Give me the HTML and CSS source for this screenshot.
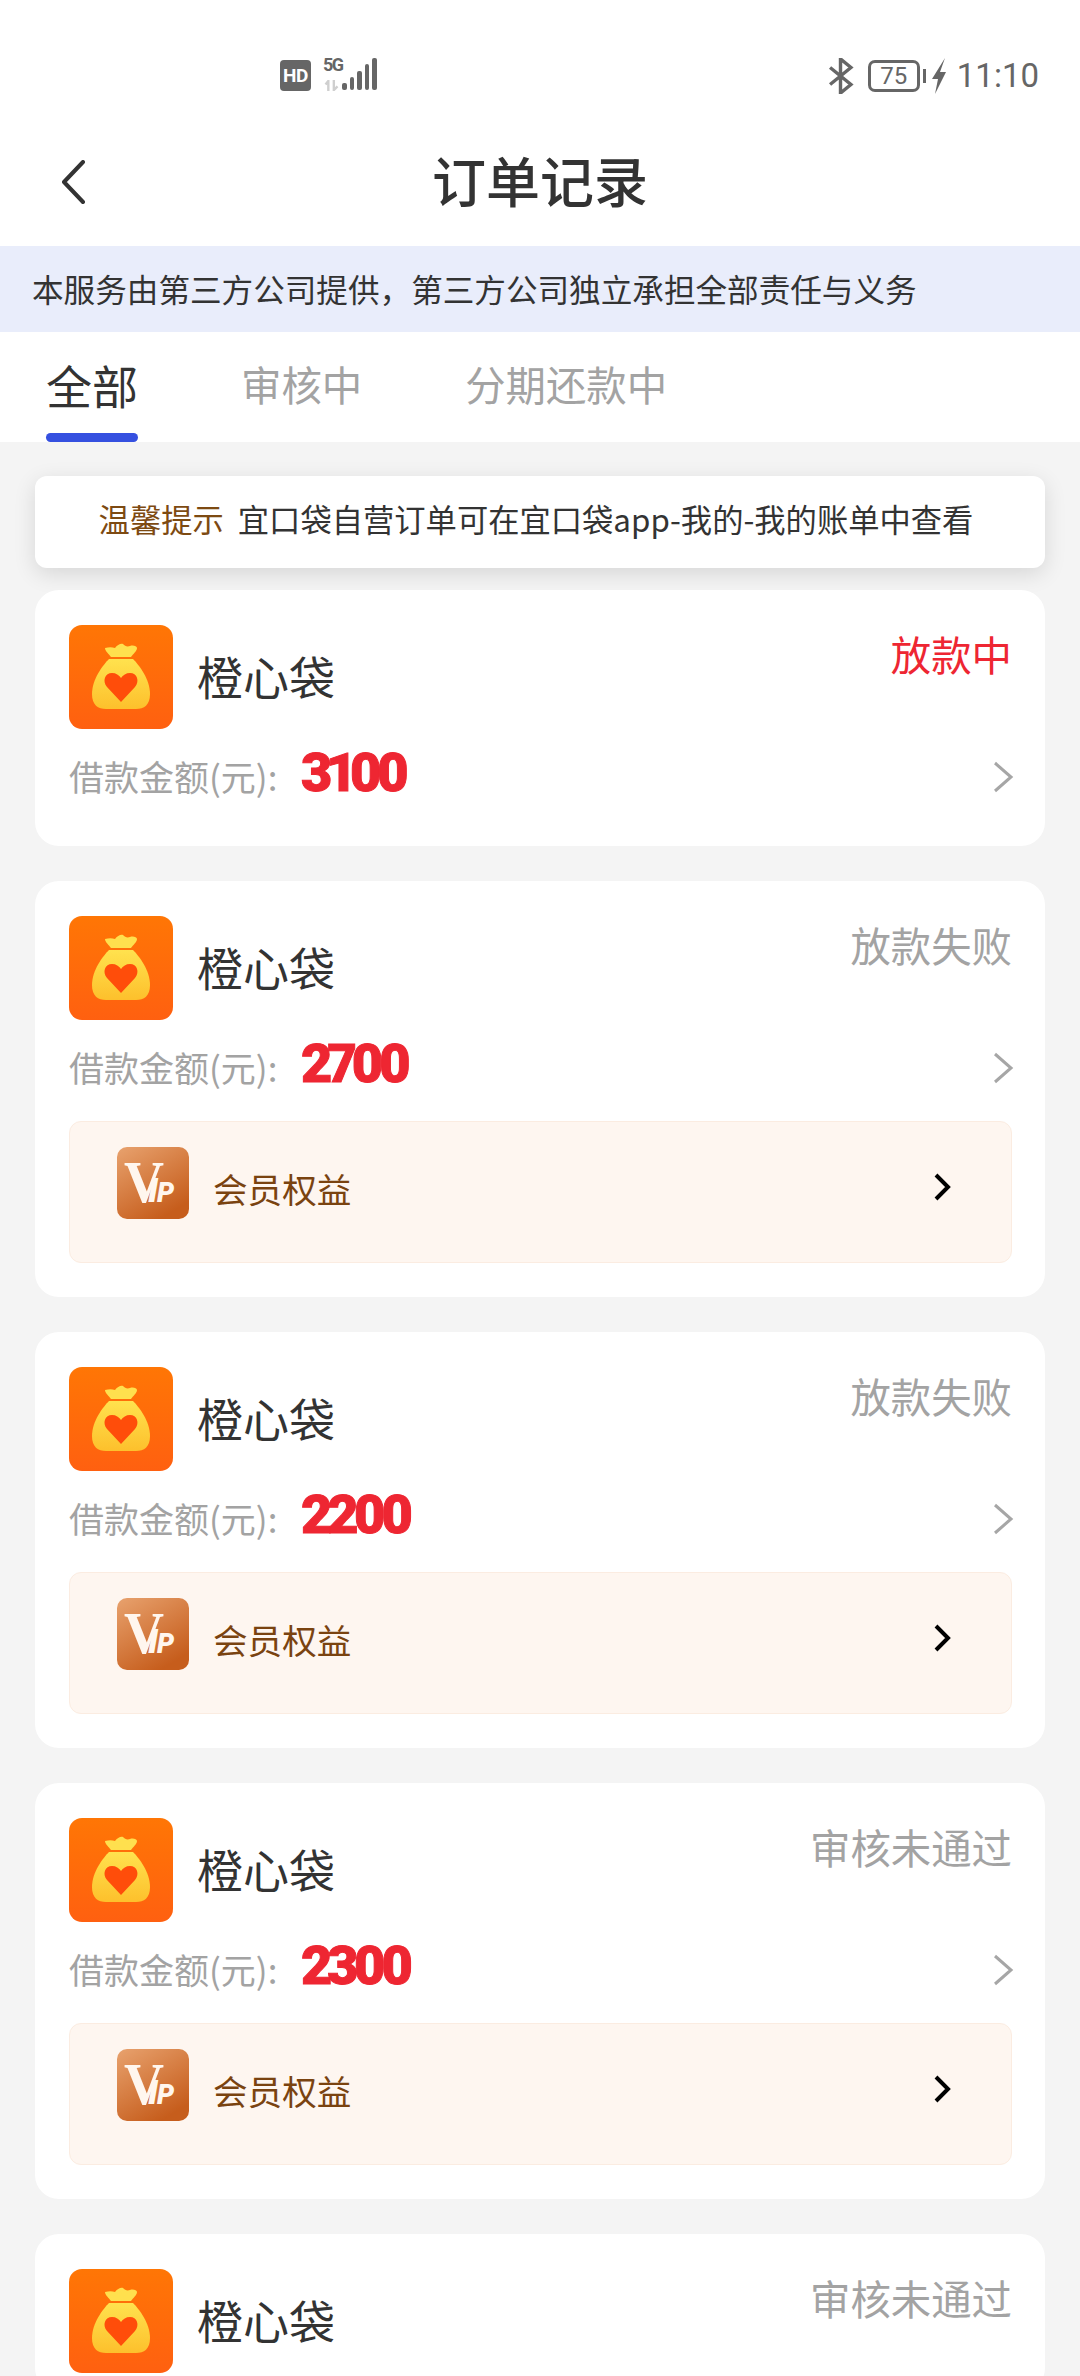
FILE: index.html
```html
<!DOCTYPE html>
<html lang="zh-CN">
<head>
<meta charset="utf-8">
<title>订单记录</title>
<link rel="stylesheet" href="styles.css">
</head>
<body>
<svg class="defs" width="0" height="0" aria-hidden="true">
  <defs>
    <linearGradient id="bagBg" x1="0" y1="0" x2="0" y2="1"><stop offset="0" stop-color="#ff7605"/><stop offset="1" stop-color="#ff6010"/></linearGradient>
    <linearGradient id="bagFill" x1="0" y1="0" x2="0" y2="1"><stop offset="0" stop-color="#ffe24e"/><stop offset="1" stop-color="#fdc02c"/></linearGradient>
    <linearGradient id="vipBg" x1="0" y1="0" x2="0.6" y2="1"><stop offset="0" stop-color="#e8a26e"/><stop offset="1" stop-color="#c65d1c"/></linearGradient>
    <symbol id="bag" viewBox="0 0 104 104">
      <rect width="104" height="104" rx="13" fill="url(#bagBg)"/>
      <path d="M36 23c4-1 7-1 10 0 2-3 6-5 8-4 2 2 4 3 7 2 3-1 7 0 7 2 0 3-4 6-6 9H42c-2-3-6-6-6-9z" fill="#ffe04e"/>
      <path d="M40 34h24c6 6 17 20 17 35 0 11-6 15-14 15H37c-8 0-14-4-14-15 0-15 11-29 17-35z" fill="url(#bagFill)"/>
      <path d="M52 77 38 62c-5-6-2-14 5-14 4 0 7 2 9 5 2-3 5-5 9-5 7 0 10 8 5 14z" fill="#ff4d0a"/>
    </symbol>
    <symbol id="vip" viewBox="0 0 72 72">
      <rect width="72" height="72" rx="10" fill="url(#vipBg)"/>
      <text x="7" y="55" class="vip-v" textLength="40" lengthAdjust="spacingAndGlyphs">V</text>
      <text x="31" y="55" class="vip-i">I</text>
      <text x="40" y="55" class="vip-p">P</text>
    </symbol>
  </defs>
</svg>

<div class="statusbar">
  <div class="status-left">
    <span class="hd">HD</span>
    <div class="signal">
      <div class="net"><span class="fiveg">5G</span>
        <svg class="arrows" width="18" height="11" viewBox="0 0 18 12"><path d="M2 5 5 1v11M11 0v11l4-4" fill="none" stroke="#cfcfcf" stroke-width="2.6"/></svg>
      </div>
      <div class="bars"><i class="b1"></i><i class="b2"></i><i class="b3"></i><i class="b4"></i><i class="b5"></i></div>
    </div>
  </div>
  <div class="status-right">
    <svg class="bt" width="27" height="36" viewBox="0 0 28 38"><path d="M3 10 25 28 14 37V1L25 10 3 28" fill="none" stroke="#666" stroke-width="3.600"/></svg>
    <span class="battery">75</span><span class="batcap"></span>
    <svg class="bolt" width="16" height="36" viewBox="0 0 16 36"><path d="M14 0 1 21h6L4 36 15 14H9z" fill="#666"/></svg>
    <span class="time">11:10</span>
  </div>
</div>

<header class="navbar">
  <svg class="back" width="26" height="44" viewBox="0 0 26 44"><path d="M23 2 4 22l19 20" fill="none" stroke="#333" stroke-width="4" stroke-linecap="round" stroke-linejoin="round"/></svg>
  <h1 class="title">订单记录</h1>
</header>

<div class="banner">本服务由第三方公司提供，第三方公司独立承担全部责任与义务</div>

<nav class="tabs">
  <a class="tab active">全部</a>
  <a class="tab">审核中</a>
  <a class="tab">分期还款中</a>
</nav>

<main class="list">
  <div class="notice"><span class="notice-tag">温馨提示</span><span>宜口袋自营订单可在宜口袋app-我的-我的账单中查看</span></div>

  <section class="card">
    <div class="card-head">
      <svg class="logo"><use href="#bag"/></svg>
      <span class="name">橙心袋</span>
      <span class="status red">放款中</span>
    </div>
    <div class="amount-row">
      <span class="amount-label">借款金额(元):</span><span class="amount">3100</span>
      <svg class="chev" width="22" height="32" viewBox="0 0 22 32"><path d="M3 2l16 14L3 30" fill="none" stroke="#a6a6a6" stroke-width="3"/></svg>
    </div>
  </section>

  <section class="card">
    <div class="card-head">
      <svg class="logo"><use href="#bag"/></svg>
      <span class="name">橙心袋</span>
      <span class="status">放款失败</span>
    </div>
    <div class="amount-row">
      <span class="amount-label">借款金额(元):</span><span class="amount">2700</span>
      <svg class="chev" width="22" height="32" viewBox="0 0 22 32"><path d="M3 2l16 14L3 30" fill="none" stroke="#a6a6a6" stroke-width="3"/></svg>
    </div>
    <div class="vip">
      <svg class="vip-icon"><use href="#vip"/></svg>
      <span class="vip-text">会员权益</span>
      <svg class="vip-chev" width="20" height="30" viewBox="0 0 20 30"><path d="M3 3l12 12L3 27" fill="none" stroke="#000" stroke-width="4"/></svg>
    </div>
  </section>

  <section class="card">
    <div class="card-head">
      <svg class="logo"><use href="#bag"/></svg>
      <span class="name">橙心袋</span>
      <span class="status">放款失败</span>
    </div>
    <div class="amount-row">
      <span class="amount-label">借款金额(元):</span><span class="amount">2200</span>
      <svg class="chev" width="22" height="32" viewBox="0 0 22 32"><path d="M3 2l16 14L3 30" fill="none" stroke="#a6a6a6" stroke-width="3"/></svg>
    </div>
    <div class="vip">
      <svg class="vip-icon"><use href="#vip"/></svg>
      <span class="vip-text">会员权益</span>
      <svg class="vip-chev" width="20" height="30" viewBox="0 0 20 30"><path d="M3 3l12 12L3 27" fill="none" stroke="#000" stroke-width="4"/></svg>
    </div>
  </section>

  <section class="card">
    <div class="card-head">
      <svg class="logo"><use href="#bag"/></svg>
      <span class="name">橙心袋</span>
      <span class="status">审核未通过</span>
    </div>
    <div class="amount-row">
      <span class="amount-label">借款金额(元):</span><span class="amount">2300</span>
      <svg class="chev" width="22" height="32" viewBox="0 0 22 32"><path d="M3 2l16 14L3 30" fill="none" stroke="#a6a6a6" stroke-width="3"/></svg>
    </div>
    <div class="vip">
      <svg class="vip-icon"><use href="#vip"/></svg>
      <span class="vip-text">会员权益</span>
      <svg class="vip-chev" width="20" height="30" viewBox="0 0 20 30"><path d="M3 3l12 12L3 27" fill="none" stroke="#000" stroke-width="4"/></svg>
    </div>
  </section>

  <section class="card">
    <div class="card-head">
      <svg class="logo"><use href="#bag"/></svg>
      <span class="name">橙心袋</span>
      <span class="status">审核未通过</span>
    </div>
  </section>
</main>
</body>
</html>
```
FILE: styles.css
```css
* { box-sizing: border-box; }
html, body { margin: 0; padding: 0; }
body {
  width: 1080px;
  height: 2376px;
  overflow: hidden;
  background: #f4f4f4;
  font-family: "Noto Sans CJK SC", "Noto Sans", sans-serif;
  color: #333;
}
.defs { position: absolute; }
.statusbar {
  height: 120px;
  background: #fff;
  display: flex;
  justify-content: space-between;
  padding: 51px 41px 0 280px;
  color: #666;
}
.status-left { display: flex; gap: 12px; height: 42px; }
.hd {
  width: 31px; height: 31px; margin-top: 9px;
  border-radius: 4px;
  background: #666; color: #fff;
  font: 700 19px/31px "Roboto", sans-serif;
  letter-spacing: -.5px;
  text-align: center;
}
.signal { display: flex; }
.net { display: flex; flex-direction: column; width: 19px; }
.fiveg { font: 700 18px/18px "Roboto", sans-serif; letter-spacing: -1.500px; margin-top: 5px; }
.arrows { margin-top: 6px; }
.bars { display: flex; align-items: flex-end; gap: 3px; height: 39px; }
.bars i { width: 4.500px; background: #666; border-radius: 2px; display: block; }
.bars .b1 { height: 7px; }
.bars .b2 { height: 13px; }
.bars .b3 { height: 19px; }
.bars .b4 { height: 26px; }
.bars .b5 { height: 32px; }
.status-right { display: flex; align-items: center; height: 48px; padding-top: 2px; }
.bt { margin-right: 14px; }
.battery {
  width: 52px; height: 32px;
  border: 3px solid #666; border-radius: 7px;
  font: 400 24px/26px "Roboto", sans-serif;
  text-align: center;
}
.batcap { width: 3px; height: 14px; background: #666; margin: 0 5px 0 3px; }
.bolt { margin-right: 10px; }
.time { font: 400 33px/42px "Roboto", sans-serif; }

.navbar {
  position: relative;
  height: 126px;
  background: #fff;
  display: flex;
  align-items: center;
  justify-content: center;
}
.back { position: absolute; left: 60px; top: 40px; }
.title {
  margin: 0 0 6px 0;
  font-size: 54px;
  font-weight: 500;
  line-height: 72px;
  color: #333;
}
.banner {
  height: 86px;
  background: #e9edfb;
  padding-left: 32px;
  font-size: 31.6px;
  line-height: 84px;
  color: #333;
}
.tabs {
  position: relative;
  height: 110px;
  background: #fff;
  display: flex;
  padding-left: 46px;
  gap: 103px;
}
.tab {
  display: block;
  position: relative;
  font-size: 40.4px;
  line-height: 104px;
  color: #a3a3a3;
}
.tab.active { font-size: 46px; color: #333; }
.tab.active::after {
  content: "";
  position: absolute;
  left: 0; right: 0; bottom: 0;
  height: 9px;
  border-radius: 5px;
  background: #3550e0;
}
.list {
  padding: 34px 35px 0;
  display: flex;
  flex-direction: column;
  gap: 35px;
}
.notice {
  height: 92px;
  margin-bottom: -13px;
  padding-right: 8px;
  background: #fff;
  border-radius: 12px;
  box-shadow: 0 6px 22px rgba(0,0,0,.12);
  display: flex;
  justify-content: center;
  gap: 14px;
  font-size: 31.3px;
  line-height: 86px;
  color: #333;
}
.notice-tag { color: #7d4a12; }
.card {
  background: #fff;
  border-radius: 24px;
  padding: 35px 33px 20px 34px;
  flex-shrink: 0;
}
.card-head { display: flex; align-items: flex-start; height: 103px; }
.logo { width: 104px; height: 104px; flex-shrink: 0; }
.name { margin-left: 24px; font-size: 46px; line-height: 100px; color: #333; }
.status {
  margin-left: auto;
  font-size: 40.4px;
  line-height: 58px;
  color: #a3a3a3;
}
.status.red { color: #ee2632; }
.amount-row { height: 98px; display: flex; align-items: center; }
.amount-label { font-size: 35px; color: #a3a3a3; width: 232px; margin-top: -4px; }
.amount {
  font: 900 54px/60px "Roboto", sans-serif;
  font-feature-settings: "pnum";
  letter-spacing: -5px;
  -webkit-text-stroke: 1px #ee2632;
  color: #ee2632;
  margin-top: -8px;
}
.chev { margin-left: auto; margin-right: -2px; }
.vip {
  height: 142px;
  margin: 4px 0 14px;
  background: #fef6f0;
  border: 1px solid #fbece1;
  border-radius: 12px;
  display: flex;
  align-items: flex-start;
  padding-left: 47px;
}
.vip-icon { width: 72px; height: 72px; margin-top: 25px; flex-shrink: 0; }
.vip-text { margin-left: 24px; font-size: 34.6px; line-height: 133px; color: #7a4310; }
.vip-chev { margin-left: auto; margin-right: 58px; margin-top: 50px; }
.vip-v { font: 700 60px "Liberation Serif", serif; fill: #fff6ee; }
.vip-i { font: italic 900 34px "Roboto", sans-serif; fill: #fff6ee; }
.vip-p { font: italic 900 27px "Roboto", sans-serif; fill: #fff6ee; }
```
